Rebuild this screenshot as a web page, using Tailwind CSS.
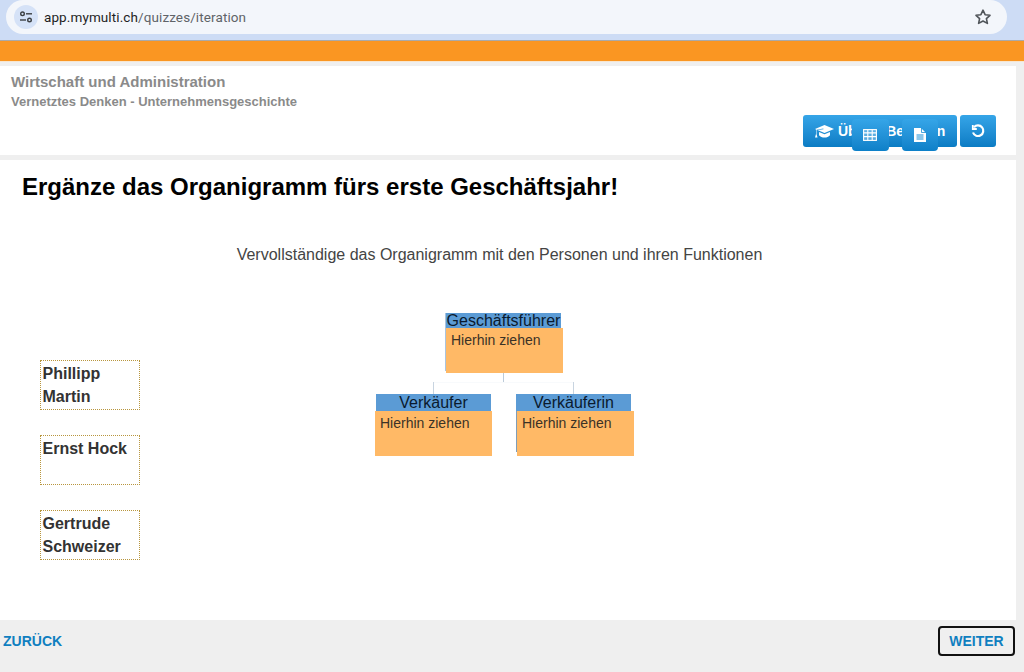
<!DOCTYPE html>
<html lang="de">
<head>
<meta charset="utf-8">
<title>Organigramm</title>
<script src="https://cdn.jsdelivr.net/npm/@tailwindcss/browser@4"></script>
</head>
<body class="m-0 overflow-hidden">
<div class="w-[1024px] h-[672px] flex flex-col bg-[#efefef] font-['Liberation_Sans',Arial,sans-serif] overflow-hidden">
  <!-- browser bar -->
  <div class="h-[41px] shrink-0 bg-[#cddcf5] border-b border-b-[#a9a9a9] pr-[17px] pl-[6px]">
    <div class="h-[34px] bg-[#f3f6fb] rounded-r-[17px] rounded-l-[17px] flex items-center pl-[8px] pr-[15px] font-['Roboto',sans-serif]">
      <div class="w-[24px] h-[24px] rounded-full bg-[#d5e2f7] flex items-center justify-center">
        <svg width="16" height="12" viewBox="0 0 16 12" fill="none" stroke="#3c4043" stroke-width="1.4"><circle cx="4.5" cy="2.8" r="1.8"/><path d="M8 2.8h6"/><path d="M2 9h6"/><circle cx="11.5" cy="9" r="1.8"/></svg>
      </div>
      <div class="ml-[6px] text-[13.5px] text-[#1f1f1f] tracking-[0.1px]">app.mymulti.ch<span class="text-[#5f6368]">/quizzes/iteration</span></div>
      <svg class="ml-auto" width="18" height="18" viewBox="0 0 18 18" fill="none" stroke="#50555a" stroke-width="1.6" stroke-linejoin="round"><path d="M9 2.2l2.1 4.5 4.9.6-3.6 3.3 1 4.8L9 13l-4.4 2.4 1-4.8L2 7.3l4.9-.6z"/></svg>
    </div>
  </div>
  <!-- orange bar -->
  <div class="h-[20px] shrink-0 bg-[#fa9622]"></div>
  <div class="h-[1px] shrink-0 bg-[#f8e6cf]"></div>

  <!-- header panel -->
  <div class="mt-[4px] h-[89px] w-[1016px] shrink-0 bg-white relative pl-[11px] pt-[7px]">
    <div class="text-[15px] leading-[18px] font-bold text-[#8a8a8a]">Wirtschaft und Administration</div>
    <div class="mt-[2px] text-[13px] leading-[18px] font-bold text-[#8a8a8a]">Vernetztes Denken - Unternehmensgeschichte</div>
    <div class="absolute left-[803px] top-[49px] flex gap-[3px]">
      <div class="w-[154px] h-[32px] rounded-[3px] bg-gradient-to-b from-[#35a5e8] to-[#0a7cc4] text-white text-[14px] font-bold flex items-center pl-[12px] whitespace-nowrap">
        <svg width="19" height="15" viewBox="0 0 19 15" fill="#fff"><path d="M9.5 1L19 5 9.5 9 2.5 6.1 8.5 5.2 8.3 4.6 1.5 5.7V10l1 3.5H0L1 10V5.4L0 5z"/><path d="M4 8l5.5 2.3L15 8v3.2c-1.3 1.5-3.3 2.3-5.5 2.3S5.300 12.700 4 11.200z"/></svg>
        <span class="ml-[4px]">Übung Beenden</span>
      </div>
      <div class="w-[36px] h-[32px] rounded-[3px] bg-gradient-to-b from-[#35a5e8] to-[#0a7cc4] flex items-center justify-center">
        <svg width="14" height="14" viewBox="0 0 14 14" fill="none" stroke="#fff" stroke-width="2.200"><path d="M3 3.200A5.300 5.300 0 1 1 2 8.500"/><path d="M1.800 1v4h4" stroke-width="1.800"/></svg>
      </div>
    </div>
    <div class="absolute left-[852px] top-[53px] w-[37px] h-[32px] rounded-[4px] bg-gradient-to-b from-[#35a5e8] to-[#0d80c8] flex items-center justify-center pr-[2px]">
      <svg width="14" height="12" viewBox="0 0 14 12" fill="none" stroke="#fff" stroke-width="1.100"><rect x="0.600" y="0.600" width="12.800" height="10.800" fill="#ffffff40"/><path d="M0.600 3.900h12.800M0.600 7.600h12.800M4.800 0.600v10.800M9.200 0.600v10.800"/></svg>
    </div>
    <div class="absolute left-[902px] top-[53px] w-[36px] h-[32px] rounded-[4px] bg-gradient-to-b from-[#35a5e8] to-[#0d80c8] flex items-center justify-center">
      <svg width="12" height="14" viewBox="0 0 12 14"><path d="M0 0h7l5 5v9H0z" fill="#fff"/><path d="M7.500 0v4.500H12" fill="none" stroke="#1b8fd6" stroke-width="0.800"/><path d="M2.500 7h7M2.500 9h7M2.500 11h7" stroke="#1b8fd6" stroke-width="1"/></svg>
    </div>
  </div>

  <!-- main panel -->
  <div class="mt-[5px] h-[460px] w-[1016px] shrink-0 bg-white relative">
    <h1 class="pl-[22px] pt-[12px] text-[24px] leading-[30px] font-bold text-black">Ergänze das Organigramm fürs erste Geschäftsjahr!</h1>
    <p class="absolute left-0 w-[999px] top-[85px] text-center text-[16px] leading-[20px] text-[#444]">Vervollständige das Organigramm mit den Personen und ihren Funktionen</p>

    <!-- draggable names -->
    <div class="absolute left-[40px] top-[200px] flex flex-col gap-[25px] text-[16px] leading-[23px] font-bold text-[#333]">
      <div class="w-[100px] h-[50px] border border-dotted border-[#b8963e] pl-[1.500px] pt-[1px]">Phillipp Martin</div>
      <div class="w-[100px] h-[50px] border border-dotted border-[#b8963e] pl-[1.500px] pt-[1px]">Ernst Hock</div>
      <div class="w-[100px] h-[50px] border border-dotted border-[#b8963e] pl-[1.500px] pt-[1px]">Gertrude Schweizer</div>
    </div>

    <!-- organigram connectors -->
    <div class="absolute left-[503px] top-[213px] w-[1px] h-[10px] bg-[#bccbd9]"></div>
    <div class="absolute left-[433px] top-[222px] w-[141px] h-[1px] bg-[#f8fafc]"></div>
    <div class="absolute left-[433px] top-[222px] w-[1px] h-[12px] bg-[#c8d4e0]"></div>
    <div class="absolute left-[573px] top-[222px] w-[1px] h-[12px] bg-[#c8d4e0]"></div>

    <!-- organigram nodes -->
    <div class="absolute left-[445px] top-[153px] w-[116px] h-[58px] border-l border-l-[#a9c4de]"></div>
    <div class="absolute left-[446px] top-[153px] w-[115px] h-[16px] bg-[#5b9bd5] text-[16px] leading-[16px] text-center text-[#0a1a2e] whitespace-nowrap">Geschäftsführer</div>
    <div class="absolute left-[446px] top-[168px] w-[117px] h-[45px] bg-[#ffb966] pl-[5px] pt-[4px] text-[14px] leading-[16px] text-[#3b3226]">Hierhin ziehen</div>

    <div class="absolute left-[376px] top-[234px] w-[115px] h-[17px] bg-[#5b9bd5] text-[16px] leading-[17px] text-center text-[#0a1a2e]">Verkäufer</div>
    <div class="absolute left-[375px] top-[251px] w-[117px] h-[45px] bg-[#ffb966] pl-[5px] pt-[4px] text-[14px] leading-[16px] text-[#3b3226]">Hierhin ziehen</div>

    <div class="absolute left-[516px] top-[234px] w-[115px] h-[58px] border-l border-l-[#7f9db8]"></div>
    <div class="absolute left-[516px] top-[234px] w-[115px] h-[17px] bg-[#5b9bd5] text-[16px] leading-[17px] text-center text-[#0a1a2e]">Verkäuferin</div>
    <div class="absolute left-[517px] top-[251px] w-[117px] h-[45px] bg-[#ffb966] pl-[5px] pt-[4px] text-[14px] leading-[16px] text-[#3b3226]">Hierhin ziehen</div>
  </div>

  <!-- footer -->
  <div class="flex-1 flex items-start justify-between pl-[3px] pr-[9px] pt-[6px]">
    <div class="mt-[7px] text-[14px] leading-[16px] font-bold text-[#0f7fc0]">ZURÜCK</div>
    <div class="w-[77px] h-[30px] rounded-[4px] border-2 border-[#111] flex items-center justify-center text-[14px] font-bold text-[#0f7fc0]">WEITER</div>
  </div>
</div>
</body>
</html>
